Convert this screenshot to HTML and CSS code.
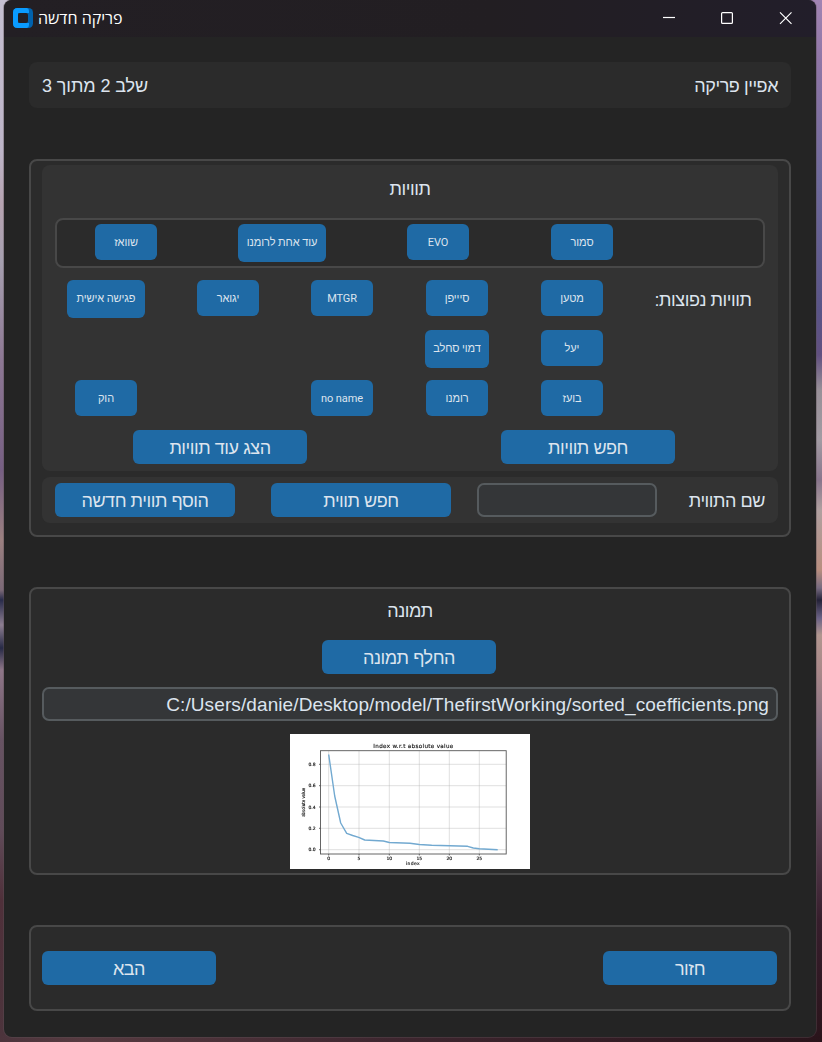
FILE: index.html
```html
<!DOCTYPE html>
<html lang="he">
<head>
<meta charset="utf-8">
<title>פריקה חדשה</title>
<link rel="stylesheet" href="styles.css">
</head>
<body>
<div class="window">
  <header class="titlebar">
    <svg class="logo" width="20" height="20" viewBox="0 0 20 20">
      <rect width="20" height="20" rx="4.500" fill="#0062ae"/>
      <path d="M4.500 0H14Q16 .5 16 3V5H5V15H16V17Q16 19.500 14 20H4.500Q0 20 0 15.500V4.500Q0 0 4.500 0Z" fill="#0a9bff"/>
      <rect x="5" y="5" width="10" height="10" rx="2" fill="#231f24"/>
    </svg>
    <h1 class="caption" dir="rtl">פריקה חדשה</h1>
    <svg class="controls" width="130" height="14" viewBox="0 0 130 14" fill="none" stroke="#fff" stroke-width="1.2">
      <path d="M0 6.500H12"/>
      <rect x="58.600" y="1.600" width="10.800" height="10.800" rx="1"/>
      <path d="M117 1.300L128.500 12.800M128.500 1.300L117 12.800"/>
    </svg>
  </header>
  <main class="content">
    <section class="steps">
      <span dir="rtl" class="step">שלב 2 מתוך 3</span>
      <span dir="rtl" class="subject">אפיין פריקה</span>
    </section>

    <section class="panel tags">
      <div class="group tag-picker">
        <h2 class="heading" dir="rtl">תוויות</h2>
        <div class="selected">
          <button class="chip">שוואז</button>
          <button class="chip tall w88">עוד אחת לרומנו</button>
          <button class="chip">EVO</button>
          <button class="chip">סמור</button>
        </div>
        <div class="common">
          <button class="chip tall w78">פגישה אישית</button>
          <button class="chip">יגואר</button>
          <button class="chip">MTGR</button>
          <button class="chip">סיייפן</button>
          <button class="chip">מטען</button>
          <span class="common-label" dir="rtl">תוויות נפוצות:</span>
          <button class="chip tall w64 col4">דמוי סחלב</button>
          <button class="chip col5">יעל</button>
          <button class="chip col1">הוק</button>
          <button class="chip col3">no name</button>
          <button class="chip col4">רומנו</button>
          <button class="chip col5">בועז</button>
        </div>
        <div class="actions">
          <button class="btn">הצג עוד תוויות</button>
          <button class="btn">חפש תוויות</button>
        </div>
      </div>
      <div class="group tag-form">
        <button class="btn wide">הוסף תווית חדשה</button>
        <button class="btn wide search">חפש תווית</button>
        <input class="field name-field" type="text" dir="rtl">
        <span class="form-label" dir="rtl">שם התווית</span>
      </div>
    </section>

    <section class="panel picture">
      <h2 class="heading" dir="rtl">תמונה</h2>
      <button class="btn">החלף תמונה</button>
      <div class="field path"><span>C:/Users/danie/Desktop/model/ThefirstWorking/sorted_coefficients.png</span></div>
      <svg class="chart" width="240" height="135" viewBox="0 0 240 135">
        <rect width="240" height="135" fill="#fff"/>
        <g class="plot">
          <path class="grid" d="M38.700 17V120M69 17V120M99.300 17V120M129.300 17V120M159.300 17V120M189.300 17V120M30.500 30.300H216M30.500 51.700H216M30.500 73H216M30.500 94.300H216M30.500 115.700H216"/>
          <path class="ticks" d="M38.700 120v1.500M69 120v1.500M99.300 120v1.500M129.300 120v1.500M159.300 120v1.500M189.300 120v1.500M30.500 30.300h-1.500M30.500 51.700h-1.500M30.500 73h-1.500M30.500 94.300h-1.500M30.500 115.700h-1.500"/>
          <rect class="axes" x="30.500" y="16.700" width="185.700" height="103.300"/>
          <polyline class="series" points="38.700,20.500 44.700,62 50.700,89 56.700,99.300 62.700,101.500 68.700,103.300 74.700,106 93.300,107 99.300,108.500 120,109.300 129.300,110.500 141.700,111.300 177.700,112.300 183.300,114 189.300,114.700 207.700,115.700"/>
          <g class="chart-text">
            <text class="chart-title" x="123.300" y="13.800" textLength="80">Index w.r.t absolute value</text>
            <text x="22" y="32">0.8</text><text x="22" y="53.300">0.6</text><text x="22" y="74.700">0.4</text><text x="22" y="96">0.2</text><text x="22" y="117.300">0.0</text>
            <text x="38.700" y="126">0</text><text x="69" y="126">5</text><text x="99.300" y="126">10</text><text x="129.300" y="126">15</text><text x="159.300" y="126">20</text><text x="189.300" y="126">25</text>
            <text x="122.700" y="131.300" textLength="14">index</text>
            <text transform="translate(14.500 68.300) rotate(-90)" textLength="29" lengthAdjust="spacingAndGlyphs">absolute value</text>
          </g>
        </g>
      </svg>
    </section>

    <section class="panel nav">
      <button class="btn">הבא</button>
      <button class="btn">חזור</button>
    </section>
  </main>
</div>
</body>
</html>
```
FILE: styles.css
```css
* { box-sizing: border-box; }

body {
  margin: 0;
  width: 822px;
  height: 1042px;
  overflow: hidden;
  padding: 0 6px 5px 4px;
  font-family: "Liberation Sans", Arial, sans-serif;
  font-size: 18px;
  letter-spacing: -.45px;
  color: #dce4ee;
  background:
    linear-gradient(90deg, #4c343c, #563a40 10%, #3f2730 45%, #2a141b) bottom / 100% 6px no-repeat,
    linear-gradient(#c5bfd1 0, #bdb5c8 150px, #b6a3b1 205px, #a6a0b0 260px, #8d7894 360px, #765f83 470px, #9b8080 540px, #7b6977 590px, #292c4b 600px, #8d7e91 625px, #272a46 648px, #8e7688 670px, #675363 740px, #604b59 830px, #4f303a 900px, #4c343c 1042px) left / 411px 100% no-repeat,
    linear-gradient(#a184b3 0, #8f76a6 60px, #6e6a9b 180px, #595487 310px, #615080 355px, #989098 390px, #a29ba3 440px, #88758c 480px, #b0a0a0 510px, #b88e7f 570px, #766a80 588px, #242238 600px, #6a6286 618px, #b1968f 635px, #a98889 670px, #806d83 740px, #5a4153 830px, #361e2c 920px, #2a141b 1042px) right / 411px 100% no-repeat;
}

button, input { font: inherit; letter-spacing: inherit; color: inherit; border: 0; padding: 0; margin: 0; }

.window {
  height: 1037px;
  background: #242424;
  border-radius: 8px;
  overflow: hidden;
  box-shadow: 0 0 0 1px #5d505666;
}

.titlebar {
  height: 37px;
  display: flex;
  align-items: flex-start;
  padding: 8px 23px 0 9px;
  background: linear-gradient(90deg, #231f24, #221e22 60%, #221e2a);
}
.caption {
  margin: -1px auto 0 5px;
  font: 400 16px/22px "Open Sans", "Liberation Sans", sans-serif;
  letter-spacing: 0;
  color: #fff;
}
.controls { margin-top: 3px; }

.content { padding: 25px 25px 0; }

.steps {
  height: 46px;
  display: flex;
  justify-content: space-between;
  align-items: center;
  padding: 2px 13px 0;
  border-radius: 8px;
  background: #2b2b2b;
}
.step { letter-spacing: -.1px; }

.panel {
  border: 2px solid #484848;
  border-radius: 8px;
  background: #2b2b2b;
}
.heading { margin: 0; font-size: 18px; font-weight: 400; line-height: 24px; text-align: center; }

.tags { margin-top: 51px; height: 378px; padding: 4px 11px; }
.group { background: #333; border-radius: 8px; }
.tag-picker { height: 306px; padding-top: 12px; }

.selected {
  height: 50px;
  margin: 17px 13px 0;
  padding: 4px 0 0 38px;
  display: flex;
  gap: 81px;
  align-items: flex-start;
  border: 2px solid #484848;
  border-radius: 8px;
  background: #2b2b2b;
}
.selected .chip:last-child { margin-left: 1px; }

.chip {
  width: 62px;
  height: 36px;
  border-radius: 6px;
  background: #1f6aa5;
  font-family: Roboto, "Liberation Sans", sans-serif;
  font-size: 11px;
  letter-spacing: -.1px;
  white-space: nowrap;
}
.chip.tall { height: 38px; padding-bottom: 2px; }
.w64 { width: 64px; }
.w78 { width: 78px; }
.w88 { width: 88px; }

.common {
  margin-top: 12px;
  display: grid;
  grid-template-columns: 128px 116px 112px 118px 112px 150px;
  grid-auto-rows: 50px;
  justify-items: center;
  align-items: start;
}
.common-label { line-height: 40px; }
.col1 { grid-column: 1; }
.col3 { grid-column: 3; }
.col4 { grid-column: 4; }
.col5 { grid-column: 5; }

.btn {
  width: 174px;
  height: 34px;
  padding-top: 2px;
  border-radius: 6px;
  background: #1f6aa5;
}
.btn.wide { width: 180px; }
.actions { display: flex; gap: 194px; padding-left: 91px; }

.tag-form {
  margin-top: 6px;
  height: 46px;
  padding: 0 13px;
  display: flex;
  align-items: center;
}
.search { margin-left: 36px; }
.field {
  height: 34px;
  border: 2px solid #565b5e;
  border-radius: 7px;
  background: #343638;
}
.name-field { width: 180px; margin-left: 26px; }
.form-label { margin-left: auto; padding-top: 2px; }

.picture {
  margin-top: 50px;
  height: 288px;
  padding: 10px 11px 0;
  display: flex;
  flex-direction: column;
  align-items: center;
}
.picture .btn { margin: 17px 2px 0 0; }
.path {
  width: 736px;
  margin-top: 13px;
  padding-right: 7px;
  font-size: 19px;
  letter-spacing: .1px;
  line-height: 31px;
  text-align: right;
}
.chart { display: block; margin-top: 13px; letter-spacing: 0; }
.plot { filter: blur(.35px); }
.grid { stroke: #b0b0b0; stroke-opacity: .5; stroke-width: .8; }
.ticks { stroke: #444; stroke-width: .8; }
.axes { fill: none; stroke: #555; stroke-width: .9; }
.series { fill: none; stroke: #72a9d0; stroke-width: 1.4; stroke-linejoin: round; }
.chart-text { font: 4.500px "DejaVu Sans", sans-serif; fill: #111; stroke: #111; stroke-width: .15; text-anchor: middle; }
.chart-title { font-size: 5.600px; }

.nav {
  margin-top: 50px;
  height: 86px;
  padding: 0 12px 0 11px;
  display: flex;
  justify-content: space-between;
  align-items: center;
}
```
